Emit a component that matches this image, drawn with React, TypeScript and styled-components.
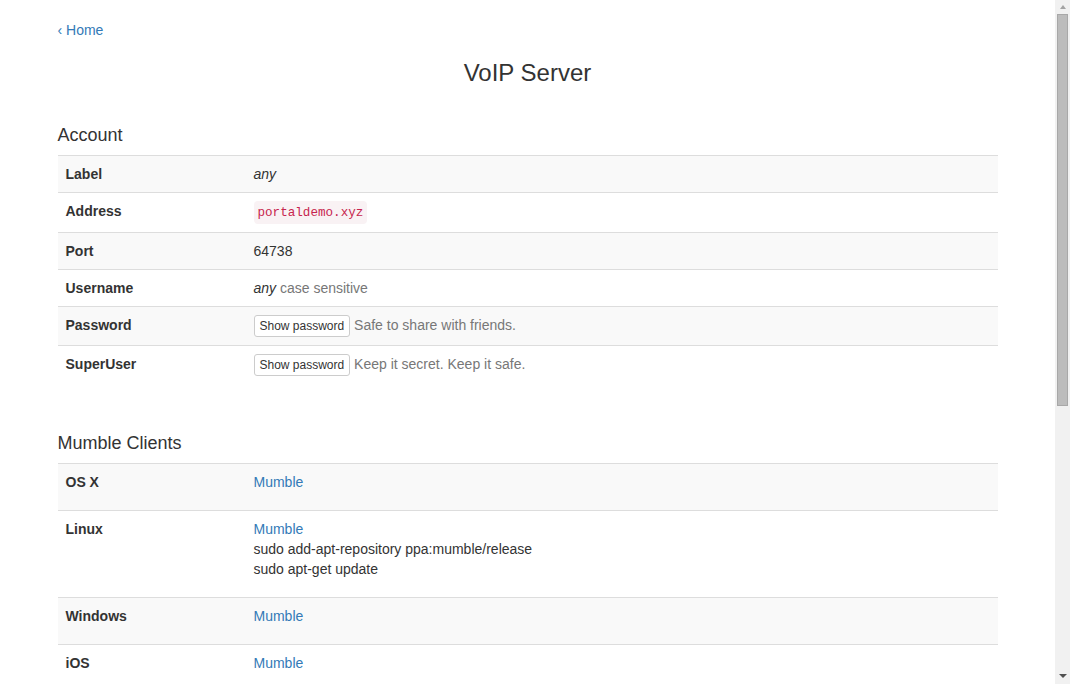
import React from "react";
import styled, { createGlobalStyle } from "styled-components";

const GlobalStyle = createGlobalStyle`
  html, body { margin: 0; padding: 0; background: #fff; }
  body {
    font-family: "Liberation Sans", Arial, sans-serif;
    font-size: 14px;
    line-height: 20px;
    color: #333;
  }
  * { box-sizing: border-box; }
`;

const Frame = styled.div`
  display: flex;
  height: 100vh;
  overflow: hidden;
`;

const Viewport = styled.main`
  flex: 1;
  min-width: 0;
  overflow: hidden;
`;

const ScrollBar = styled.div`
  width: 15px;
  flex: none;
  display: flex;
  flex-direction: column;
  background: #f1f1f1;
`;

const ArrowButton = styled.div<{ $height: number }>`
  height: ${(p) => p.$height}px;
  flex: none;
  display: flex;
  align-items: center;
  justify-content: center;
`;

const UpArrow = styled.span`
  width: 0;
  height: 0;
  border-left: 3.5px solid transparent;
  border-right: 3.5px solid transparent;
  border-bottom: 4px solid #a3a3a3;
  margin-top: -1px;
`;

const DownArrow = styled.span`
  width: 0;
  height: 0;
  border-left: 4px solid transparent;
  border-right: 4px solid transparent;
  border-top: 4px solid #505050;
  margin-top: -2px;
`;

const Track = styled.div`
  flex: 1;
  padding: 0 2px;
`;

const Thumb = styled.div`
  height: 392px;
  background: #bcbcbc;
  border: 1px solid #a8a8a8;
`;

const Container = styled.div`
  width: 970px;
  margin: 0 auto;
  padding: 20px 15px 0;
  display: flex;
  flex-direction: column;
`;

const Link = styled.a`
  color: #337ab7;
  text-decoration: none;
`;

const BackLink = styled(Link)`
  align-self: flex-start;
  line-height: 20px;
`;

const Title = styled.h3`
  margin: 20px 0 0;
  font-size: 24px;
  line-height: 26px;
  font-weight: 500;
  text-align: center;
  color: #333;
`;

const Section = styled.section<{ $gap: number }>`
  margin-top: ${(p) => p.$gap}px;
  display: flex;
  flex-direction: column;
`;

const SectionTitle = styled.h4`
  margin: 0 0 10px;
  font-size: 18px;
  line-height: 20px;
  font-weight: 500;
  color: #333;
`;

const Table = styled.table`
  width: 100%;
  border-collapse: collapse;
  border-spacing: 0;
  margin-bottom: 20px;
`;

const Row = styled.tr`
  &:nth-child(odd) { background: #f9f9f9; }
`;

const Th = styled.th`
  width: 20%;
  padding: 8px;
  text-align: left;
  vertical-align: top;
  font-weight: bold;
  border-top: 1px solid #ddd;
  line-height: 20px;
`;

const Td = styled.td`
  padding: 8px;
  vertical-align: top;
  border-top: 1px solid #ddd;
  line-height: 20px;
`;

const Code = styled.code`
  display: inline-block;
  vertical-align: top;
  padding: 3px 4px 1px;
  font-family: "Liberation Mono", "Courier New", monospace;
  font-size: 12.6px;
  line-height: 19px;
  color: #c7254e;
  background: #f9f2f4;
  border-radius: 4px;
`;

const Muted = styled.span`
  color: #777;
`;

const SmallButton = styled.button`
  display: inline-block;
  vertical-align: top;
  margin: 0;
  padding: 1px 5px;
  font-family: "Liberation Sans", Arial, sans-serif;
  font-size: 12px;
  line-height: 18px;
  color: #333;
  background: #fff;
  border: 1px solid #ccc;
  border-radius: 3px;
  cursor: pointer;
`;

const ClientBlock = styled.div`
  margin-bottom: 10px;
  display: flex;
  flex-direction: column;
  align-items: flex-start;
`;

const account: { label: string; value: React.ReactNode }[] = [
  { label: "Label", value: <em>any</em> },
  { label: "Address", value: <Code>portaldemo.xyz</Code> },
  { label: "Port", value: "64738" },
  {
    label: "Username",
    value: (
      <>
        <em>any</em> <Muted>case sensitive</Muted>
      </>
    ),
  },
  {
    label: "Password",
    value: (
      <>
        <SmallButton>Show password</SmallButton> <Muted>Safe to share with friends.</Muted>
      </>
    ),
  },
  {
    label: "SuperUser",
    value: (
      <>
        <SmallButton>Show password</SmallButton> <Muted>Keep it secret. Keep it safe.</Muted>
      </>
    ),
  },
];

const clients: { os: string; lines?: string[] }[] = [
  { os: "OS X" },
  { os: "Linux", lines: ["sudo add-apt-repository ppa:mumble/release", "sudo apt-get update"] },
  { os: "Windows" },
  { os: "iOS" },
  { os: "Android" },
];

export default function App() {
  return (
    <>
      <GlobalStyle />
      <Frame>
        <Viewport>
          <Container>
            <BackLink href="#">‹ Home</BackLink>
            <Title>VoIP Server</Title>
            <Section $gap={39}>
              <SectionTitle>Account</SectionTitle>
              <Table>
                <tbody>
                  {account.map((r) => (
                    <Row key={r.label}>
                      <Th>{r.label}</Th>
                      <Td>{r.value}</Td>
                    </Row>
                  ))}
                </tbody>
              </Table>
            </Section>
            <Section $gap={29}>
              <SectionTitle>Mumble Clients</SectionTitle>
              <Table>
                <tbody>
                  {clients.map((c) => (
                    <Row key={c.os}>
                      <Th>{c.os}</Th>
                      <Td>
                        <ClientBlock>
                          <Link href="#">Mumble</Link>
                          {c.lines?.map((l) => (
                            <span key={l}>{l}</span>
                          ))}
                        </ClientBlock>
                      </Td>
                    </Row>
                  ))}
                </tbody>
              </Table>
            </Section>
          </Container>
        </Viewport>
        <ScrollBar aria-hidden>
          <ArrowButton $height={14}>
            <UpArrow />
          </ArrowButton>
          <Track>
            <Thumb />
          </Track>
          <ArrowButton $height={15}>
            <DownArrow />
          </ArrowButton>
        </ScrollBar>
      </Frame>
    </>
  );
}
